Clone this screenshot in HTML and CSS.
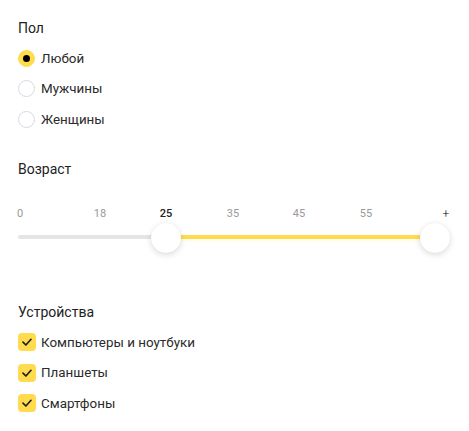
FILE: index.html
```html
<!DOCTYPE html>
<html lang="ru">
<head>
<meta charset="utf-8">
<link rel="stylesheet" href="styles.css">
</head>
<body>
<div class="panel">
  <section class="group">
    <div class="title">Пол</div>
    <div class="options">
      <label class="opt"><span class="radio checked"></span><span>Любой</span></label>
      <label class="opt"><span class="radio"></span><span>Мужчины</span></label>
      <label class="opt"><span class="radio"></span><span>Женщины</span></label>
    </div>
  </section>

  <section class="group age">
    <div class="title">Возраст</div>
    <div class="slider">
      <div class="scale">
        <span class="tick" style="left:2px">0</span>
        <span class="tick" style="left:82px">18</span>
        <span class="tick active" style="left:148px">25</span>
        <span class="tick" style="left:215px">35</span>
        <span class="tick" style="left:281px">45</span>
        <span class="tick" style="left:348px">55</span>
        <span class="tick plus" style="left:428px">+</span>
      </div>
      <div class="track">
        <div class="rail" style="width:148px"></div>
        <div class="fill" style="width:269px"></div>
        <span class="thumb" style="left:148px"></span>
        <span class="thumb" style="left:417px"></span>
      </div>
    </div>
  </section>

  <section class="group devices">
    <div class="title">Устройства</div>
    <div class="options">
      <label class="opt"><span class="check"><svg viewBox="0 0 18 18" width="18" height="18"><path d="M5 9.2 L7.9 12 L13 6.3" fill="none" stroke="#1f1f1f" stroke-width="1.7" stroke-linecap="round" stroke-linejoin="round"/></svg></span><span>Компьютеры и ноутбуки</span></label>
      <label class="opt"><span class="check"><svg viewBox="0 0 18 18" width="18" height="18"><path d="M5 9.2 L7.9 12 L13 6.3" fill="none" stroke="#1f1f1f" stroke-width="1.7" stroke-linecap="round" stroke-linejoin="round"/></svg></span><span>Планшеты</span></label>
      <label class="opt"><span class="check"><svg viewBox="0 0 18 18" width="18" height="18"><path d="M5 9.2 L7.9 12 L13 6.3" fill="none" stroke="#1f1f1f" stroke-width="1.7" stroke-linecap="round" stroke-linejoin="round"/></svg></span><span>Смартфоны</span></label>
    </div>
  </section>
</div>
</body>
</html>
```

FILE: styles.css
```css
html, body {
  margin: 0;
  padding: 0;
  background: #ffffff;
}
body {
  font-family: "Roboto", "Noto Sans", sans-serif;
  color: #222222;
  font-size: 14px;
}
.panel {
  padding: 18px 18px 0 18px;
  width: 469px;
  box-sizing: border-box;
}
.title {
  font-size: 14px;
  line-height: 20px;
  height: 20px;
  color: #222;
}
.options {
  margin-top: 5px;
  display: flex;
  flex-direction: column;
}
.opt {
  display: flex;
  align-items: center;
  height: 30.5px;
  gap: 6px;
  font-size: 13.4px;
  color: #2b2b2b;
}
.radio {
  width: 17px;
  height: 17px;
  box-sizing: border-box;
  border-radius: 50%;
  border: 1px solid #d6dbe0;
  background: #fff;
  flex: none;
  display: flex;
  align-items: center;
  justify-content: center;
}
.radio.checked {
  background: #ffdb4d;
  border-color: #ffdb4d;
}
.radio.checked::after {
  content: "";
  width: 7px;
  height: 7px;
  border-radius: 50%;
  background: #000;
}
.age {
  margin-top: 24.5px;
}
.slider {
  margin-top: 27px;
  width: 433px;
}
.scale {
  position: relative;
  height: 16px;
  font-size: 11px;
  line-height: 16px;
  color: #999;
}
.tick {
  position: absolute;
  top: 0;
  transform: translateX(-50%);
}
.tick.active {
  color: #222;
  font-weight: 500;
}
.tick.plus {
  color: #000;
  font-size: 12px;
  font-weight: 300;
}
.track {
  position: relative;
  margin-top: 13px;
  height: 4px;
  display: flex;
}
.rail {
  height: 4px;
  background: #e5e5e5;
  border-radius: 2px 0 0 2px;
}
.fill {
  height: 4px;
  background: #ffdb4d;
  box-shadow: 0 2px 4px rgba(255, 219, 77, 0.15);
}
.thumb {
  position: absolute;
  top: 50%;
  width: 30px;
  height: 30px;
  margin-left: -15px;
  margin-top: -14px;
  border-radius: 50%;
  background: #fff;
  box-shadow: 0 2px 6px rgba(0, 0, 0, 0.14), 0 0 1px rgba(0, 0, 0, 0.08);
}
.devices {
  margin-top: 63px;
}
.check {
  width: 18px;
  height: 18px;
  border-radius: 4px;
  background: #ffdb4d;
  flex: none;
  display: flex;
  margin-left: -0.5px;
}
.devices .opt {
  gap: 5.5px;
}
```
